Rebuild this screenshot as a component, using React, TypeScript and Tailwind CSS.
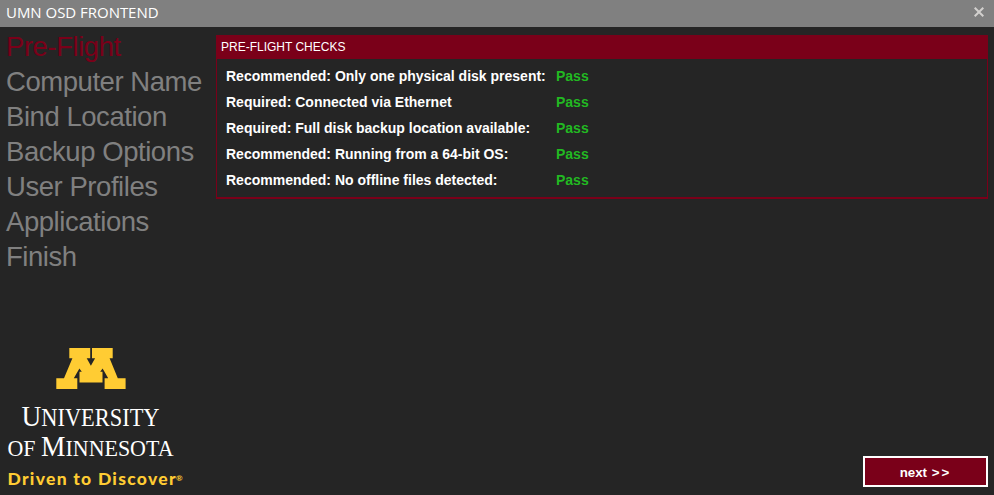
const steps = [
  'Pre-Flight',
  'Computer Name',
  'Bind Location',
  'Backup Options',
  'User Profiles',
  'Applications',
  'Finish',
];

const checks = [
  'Recommended: Only one physical disk present:',
  'Required: Connected via Ethernet',
  'Required: Full disk backup location available:',
  'Recommended: Running from a 64-bit OS:',
  'Recommended: No offline files detected:',
];

function TitleBar() {
  return (
    <header className="flex h-[27px] shrink-0 items-center justify-between bg-[#808080] pr-[10px] pl-[6px]">
      <h1 className="-mt-[3px] font-['Open_Sans',sans-serif] text-[15px] leading-[24px] font-normal tracking-[-0.03px] text-white">
        UMN OSD FRONTEND
      </h1>
      <button aria-label="Close" className="-mt-[3px]">
        <svg width="10" height="10" viewBox="0 0 10 10" stroke="#d2d0ce" strokeWidth="2">
          <path d="M.7.7 9.3 9.3M9.3.7.7 9.3" />
        </svg>
      </button>
    </header>
  );
}

function Logo() {
  return (
    <svg width="190" height="150" viewBox="0 345 190 150" className="block">
      <path
        fill="#ffcc33"
        d="M69.3 348H90.2V358.3H86.7L90.9 365.8L95.1 358.3H92V348H112.7V358.3H109.6L117.8 378.3H125.6V389H104.6V378.3H108.2L102.6 368.4L100.2 371.8H102.5V382.5H79.5V371.8H81.8L79.4 368.4L73.8 378.3H77.3V389H56.3V378.3H64L72.4 358.3H69.3Z"
      />
      <g fill="#fff" fontFamily="'Liberation Serif', serif">
        <text x="21.5" y="426.4" fontSize="30" textLength="138" lengthAdjust="spacingAndGlyphs">
          U<tspan fontSize="24.5">NIVERSITY</tspan>
        </text>
        <text x="7.5" y="456.4" fontSize="24" textLength="166" lengthAdjust="spacingAndGlyphs">
          OF <tspan fontSize="30">M</tspan>INNESOTA
        </text>
      </g>
      <g fill="#ffcc33" fontFamily="Lato, sans-serif" fontWeight="900">
        <text x="7.5" y="485" fontSize="17.5" textLength="168" lengthAdjust="spacing">
          Driven to Discover
        </text>
        <text x="176" y="481" fontSize="8" fontWeight="700">®</text>
      </g>
    </svg>
  );
}

export default function App() {
  return (
    <div className="flex h-[495px] w-[994px] flex-col overflow-hidden bg-[#252525] font-['Liberation_Sans',Arial,sans-serif]">
      <TitleBar />
      <div className="flex min-h-0 flex-1">
        <aside className="flex w-[216px] shrink-0 flex-col justify-between">
          <nav className="pt-[2px] pl-[6px]">
            {steps.map((step, i) => (
              <div
                key={step}
                className={`h-[35px] text-[27.5px] leading-[35px] tracking-[-0.45px] whitespace-nowrap ${i === 0 ? 'text-[#7a0019]' : 'text-[#808080]'}`}
              >
                {step}
              </div>
            ))}
          </nav>
          <Logo />
        </aside>
        <main className="flex flex-1 flex-col justify-between pt-2 pr-[6px] pb-2">
          <section className="h-[164px] border border-b-2 border-[#7a0019]">
            <h2 className="h-[23px] bg-[#7a0019] pl-1 text-[12px] leading-[22px] text-white">
              PRE-FLIGHT CHECKS
            </h2>
            <div className="pt-1 pl-[9px]">
              {checks.map((check) => (
                <div key={check} className="flex h-[26px] text-sm leading-[26px] font-bold">
                  <span className="w-[330px] text-white">{check}</span>
                  <span className="text-[#22b922]">Pass</span>
                </div>
              ))}
            </div>
          </section>
          <button className="h-[31px] w-[125px] self-end border-2 border-white bg-[#7a0019] pt-[2px] text-[13.33px] leading-[25px] font-bold text-white">
            next <span className="ml-px tracking-[2px]">&gt;&gt;</span>
          </button>
        </main>
      </div>
    </div>
  );
}
